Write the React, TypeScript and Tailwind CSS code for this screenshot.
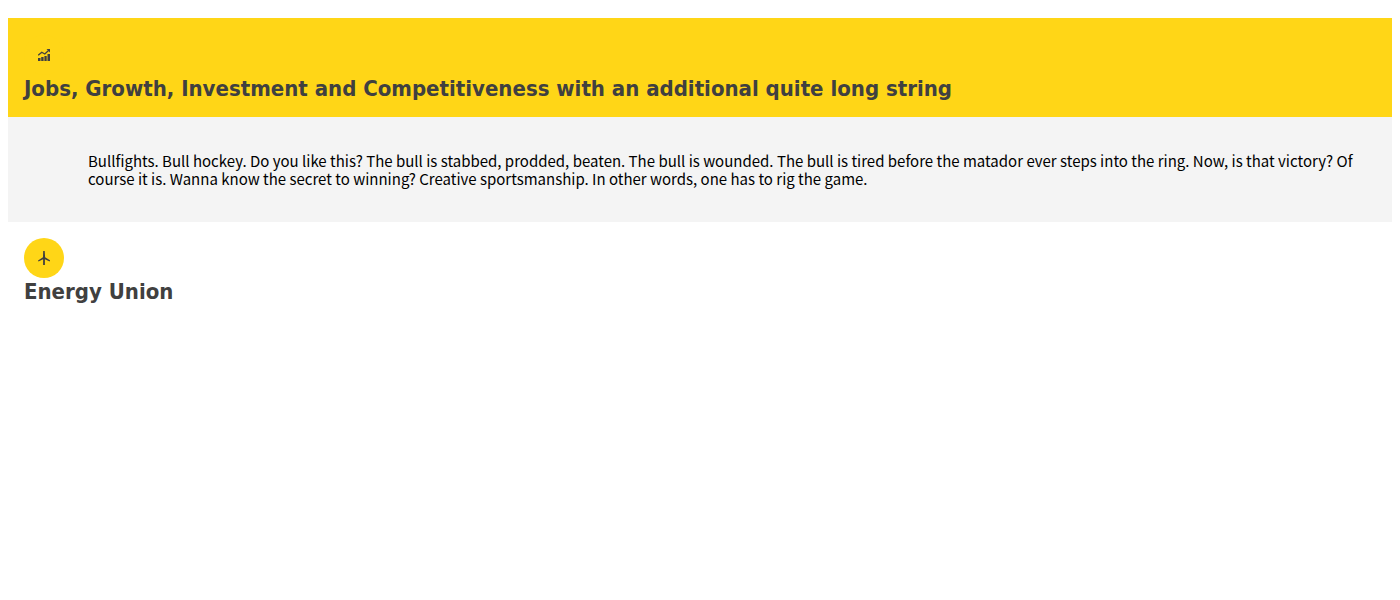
const Chart = () => (
  <svg viewBox="0 0 12 12" className="size-3" fill="#404040" aria-hidden="true">
    <path d="M0 9h2.500v3H0zM3.200 8h2.400v4H3.200zM6.400 7h2.300v5H6.400zM9.500 5H12v7H9.500z" />
    <path d="M.2 6.300 3.800 3.300 6.800 5 10.800 1.200" fill="none" stroke="#404040" strokeWidth="1.300" />
    <path d="M8.500 0H12v3.500z" />
  </svg>
);

const Turbine = () => (
  <svg viewBox="0 0 12 14" className="h-3.5 w-3" fill="#404040" aria-hidden="true">
    <path d="M5.200 0h1.500l.4 6.200 5 3.200-.5 1.200L6.900 8.300V14H5.100V8.300L.5 10.600 0 9.400l5-3.200z" />
  </svg>
);

export default function App() {
  return (
    <main className="px-2 pt-[18px] font-['Noto_Sans_CJK_JP',sans-serif]">
      <section>
        <button type="button" aria-expanded="true" aria-controls="jobs" className="block w-full bg-[#ffd617] px-4 pt-[17px] pb-3.5 text-left">
          <span className="flex size-10 items-center justify-center rounded-full bg-[#ffd617]"><Chart /></span>
          <span className="block font-['DejaVu_Sans_Condensed',sans-serif] text-[22px] leading-[28px] font-bold text-[#404040]">
            Jobs, Growth, Investment and Competitiveness with an additional quite long string
          </span>
        </button>
        <div id="jobs" className="bg-[#f4f4f4] pt-[35px] pr-8 pb-[34px] pl-20 text-[15px] leading-[18px] text-black">
          <p>
            Bullfights. Bull hockey. Do you like this? The bull is stabbed, prodded, beaten. The bull is wounded. The bull is tired before the matador ever steps into the ring. Now, is that victory? Of course it is. Wanna know the secret to winning? Creative sportsmanship. In other words, one has to rig the game.
          </p>
        </div>
      </section>
      <section>
        <button type="button" aria-expanded="false" className="block w-full px-4 pt-4 pb-3.5 text-left">
          <span className="flex size-10 items-center justify-center rounded-full bg-[#ffd617]"><Turbine /></span>
          <span className="block font-['DejaVu_Sans_Condensed',sans-serif] text-[22px] leading-[28px] font-bold text-[#404040]">Energy Union</span>
        </button>
      </section>
    </main>
  );
}
